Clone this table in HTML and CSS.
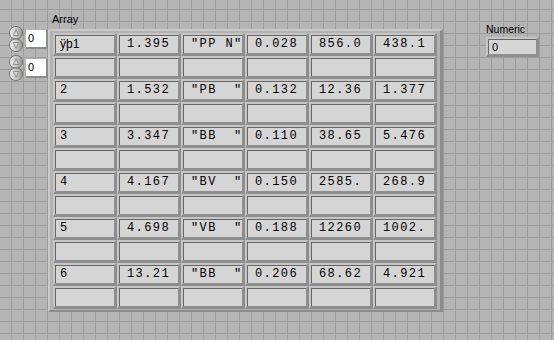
FILE: index.html
```html
<!DOCTYPE html>
<html>
<head>
<meta charset="utf-8">
<link rel="stylesheet" href="styles.css">
</head>
<body>
<div class="panel">
  <div class="indexes">
    <div class="index">
      <svg class="spin" width="14" height="26" viewBox="0 0 14 26">
        <defs><linearGradient id="sg" x1="0" x2="1" y1="0" y2="0"><stop offset="0" stop-color="#ececec"/><stop offset="0.45" stop-color="#cfcfcf"/><stop offset="1" stop-color="#949494"/></linearGradient></defs>
        <path d="M7 0.5 C11 0.5 13.5 3.5 13.5 7 C13.5 10.5 11 12.8 7 13 C3 12.8 0.5 10.5 0.5 7 C0.5 3.5 3 0.5 7 0.5 Z" fill="url(#sg)" stroke="#707070"/>
        <path d="M7 13 C11 13.2 13.5 15.5 13.5 19 C13.5 22.5 11 25.5 7 25.5 C3 25.5 0.5 22.5 0.5 19 C0.5 15.5 3 13.2 7 13 Z" fill="url(#sg)" stroke="#707070"/>
        <path d="M7 3.5 L9.5 9.5 L4.5 9.5 Z" fill="#dcdcdc" stroke="#7c7c7c" stroke-width="0.8"/>
        <path d="M7 22.5 L9.5 16.5 L4.5 16.5 Z" fill="#dcdcdc" stroke="#7c7c7c" stroke-width="0.8"/>
      </svg>
      <div class="idx-box">0</div>
    </div>
    <div class="index">
      <svg class="spin" width="14" height="26" viewBox="0 0 14 26">
        <path d="M7 0.5 C11 0.5 13.5 3.5 13.5 7 C13.5 10.5 11 12.8 7 13 C3 12.8 0.5 10.5 0.5 7 C0.5 3.5 3 0.5 7 0.5 Z" fill="url(#sg)" stroke="#707070"/>
        <path d="M7 13 C11 13.2 13.5 15.5 13.5 19 C13.5 22.5 11 25.5 7 25.5 C3 25.5 0.5 22.5 0.5 19 C0.5 15.5 3 13.2 7 13 Z" fill="url(#sg)" stroke="#707070"/>
        <path d="M7 3.5 L9.5 9.5 L4.5 9.5 Z" fill="#dcdcdc" stroke="#7c7c7c" stroke-width="0.8"/>
        <path d="M7 22.5 L9.5 16.5 L4.5 16.5 Z" fill="#dcdcdc" stroke="#7c7c7c" stroke-width="0.8"/>
      </svg>
      <div class="idx-box">0</div>
    </div>
  </div>

  <div class="array">
    <div class="label">Array</div>
    <div class="frame">
      <div class="cells">
        <div class="cell"><div class="in first str">ÿþ1</div></div>
        <div class="cell"><div class="in">1.395</div></div>
        <div class="cell"><div class="in">"PP N"</div></div>
        <div class="cell"><div class="in">0.028</div></div>
        <div class="cell"><div class="in">856.0</div></div>
        <div class="cell"><div class="in">438.1</div></div>

        <div class="cell"><div class="in first"></div></div>
        <div class="cell"><div class="in"></div></div>
        <div class="cell"><div class="in"></div></div>
        <div class="cell"><div class="in"></div></div>
        <div class="cell"><div class="in"></div></div>
        <div class="cell"><div class="in"></div></div>

        <div class="cell"><div class="in first">2</div></div>
        <div class="cell"><div class="in">1.532</div></div>
        <div class="cell"><div class="in">"PB  "</div></div>
        <div class="cell"><div class="in">0.132</div></div>
        <div class="cell"><div class="in">12.36</div></div>
        <div class="cell"><div class="in">1.377</div></div>

        <div class="cell"><div class="in first"></div></div>
        <div class="cell"><div class="in"></div></div>
        <div class="cell"><div class="in"></div></div>
        <div class="cell"><div class="in"></div></div>
        <div class="cell"><div class="in"></div></div>
        <div class="cell"><div class="in"></div></div>

        <div class="cell"><div class="in first">3</div></div>
        <div class="cell"><div class="in">3.347</div></div>
        <div class="cell"><div class="in">"BB  "</div></div>
        <div class="cell"><div class="in">0.110</div></div>
        <div class="cell"><div class="in">38.65</div></div>
        <div class="cell"><div class="in">5.476</div></div>

        <div class="cell"><div class="in first"></div></div>
        <div class="cell"><div class="in"></div></div>
        <div class="cell"><div class="in"></div></div>
        <div class="cell"><div class="in"></div></div>
        <div class="cell"><div class="in"></div></div>
        <div class="cell"><div class="in"></div></div>

        <div class="cell"><div class="in first">4</div></div>
        <div class="cell"><div class="in">4.167</div></div>
        <div class="cell"><div class="in">"BV  "</div></div>
        <div class="cell"><div class="in">0.150</div></div>
        <div class="cell"><div class="in">2585.</div></div>
        <div class="cell"><div class="in">268.9</div></div>

        <div class="cell"><div class="in first"></div></div>
        <div class="cell"><div class="in"></div></div>
        <div class="cell"><div class="in"></div></div>
        <div class="cell"><div class="in"></div></div>
        <div class="cell"><div class="in"></div></div>
        <div class="cell"><div class="in"></div></div>

        <div class="cell"><div class="in first">5</div></div>
        <div class="cell"><div class="in">4.698</div></div>
        <div class="cell"><div class="in">"VB  "</div></div>
        <div class="cell"><div class="in">0.188</div></div>
        <div class="cell"><div class="in">12260</div></div>
        <div class="cell"><div class="in">1002.</div></div>

        <div class="cell"><div class="in first"></div></div>
        <div class="cell"><div class="in"></div></div>
        <div class="cell"><div class="in"></div></div>
        <div class="cell"><div class="in"></div></div>
        <div class="cell"><div class="in"></div></div>
        <div class="cell"><div class="in"></div></div>

        <div class="cell"><div class="in first">6</div></div>
        <div class="cell"><div class="in">13.21</div></div>
        <div class="cell"><div class="in">"BB  "</div></div>
        <div class="cell"><div class="in">0.206</div></div>
        <div class="cell"><div class="in">68.62</div></div>
        <div class="cell"><div class="in">4.921</div></div>

        <div class="cell"><div class="in first"></div></div>
        <div class="cell"><div class="in"></div></div>
        <div class="cell"><div class="in"></div></div>
        <div class="cell"><div class="in"></div></div>
        <div class="cell"><div class="in"></div></div>
        <div class="cell"><div class="in"></div></div>
      </div>
    </div>
  </div>

  <div class="numeric">
    <div class="num-label">Numeric</div>
    <div class="num-box"><div class="num-in">0</div></div>
  </div>
</div>
</body>
</html>
```

FILE: styles.css
```css
html, body {
  margin: 0;
  padding: 0;
}
body {
  width: 554px;
  height: 340px;
  overflow: hidden;
  background-color: #b5b5b5;
  background-image:
    linear-gradient(to right, #9c9c9c 1px, transparent 1px),
    linear-gradient(to bottom, #9c9c9c 1px, transparent 1px);
  background-size: 12px 12px;
  background-position: 11px 9px;
  font-family: "Liberation Sans", Arial, sans-serif;
  color: #000;
}
.panel {
  display: flex;
  align-items: flex-start;
  padding: 12px 0 0 9px;
}
.indexes {
  display: flex;
  flex-direction: column;
  gap: 3px;
  margin-top: 14px;
}
.index {
  display: flex;
  align-items: center;
  height: 26px;
}
.spin {
  display: block;
  width: 14px;
  height: 26px;
}
.idx-box {
  margin-left: 3px;
  width: 18px;
  height: 17px;
  padding-left: 2px;
  background: #fff;
  border-right: 2px solid #8c8c8c;
  border-bottom: 2px solid #8c8c8c;
  font-size: 11px;
  line-height: 17px;
}
.array {
  display: flex;
  flex-direction: column;
}
.label {
  font-size: 11px;
  line-height: 15px;
  height: 15px;
  padding: 0 0 2px 4px;
}
.frame {
  background: #b2b2b2;
  border-top: 2px solid #cacaca;
  border-left: 2px solid #cacaca;
  border-right: 3px solid #8c8c8c;
  border-bottom: 2px solid #8c8c8c;
  padding: 2px 3px 1px 3px;
}
.cells {
  display: grid;
  grid-template-columns: repeat(6, 64px);
  grid-auto-rows: 23px;
}
.cell {
  box-sizing: border-box;
  border-top: 2px solid #c6c6c6;
  border-left: 2px solid #c6c6c6;
  border-right: 3px solid #8e8e8e;
  border-bottom: 3px solid #8e8e8e;
}
.in {
  box-sizing: border-box;
  height: 100%;
  background: #d5d5d5;
  border-top: 1px solid #666;
  border-left: 1px solid #666;
  padding-left: 7px;
  font-family: "Liberation Mono", "Courier New", monospace;
  font-size: 12px;
  letter-spacing: 1.4px;
  line-height: 16px;
  white-space: pre;
}
.in.first {
  padding-left: 4px;
}
.in.str {
  font-family: "Liberation Sans", Arial, sans-serif;
  font-size: 12px;
  letter-spacing: 0;
}
.numeric {
  margin-left: 43px;
  margin-top: 11px;
  display: flex;
  flex-direction: column;
}
.num-label {
  font-size: 10.5px;
  line-height: 12px;
  height: 12px;
}
.num-box {
  margin-top: 2px;
  width: 53px;
  height: 20px;
  box-sizing: border-box;
  border-top: 2px solid #c6c6c6;
  border-left: 2px solid #c6c6c6;
  border-right: 3px solid #8e8e8e;
  border-bottom: 3px solid #8e8e8e;
}
.num-in {
  box-sizing: border-box;
  height: 100%;
  background: #d5d5d5;
  border-top: 1px solid #666;
  border-left: 1px solid #666;
  padding-left: 3px;
  font-size: 11px;
  line-height: 14px;
}
```
